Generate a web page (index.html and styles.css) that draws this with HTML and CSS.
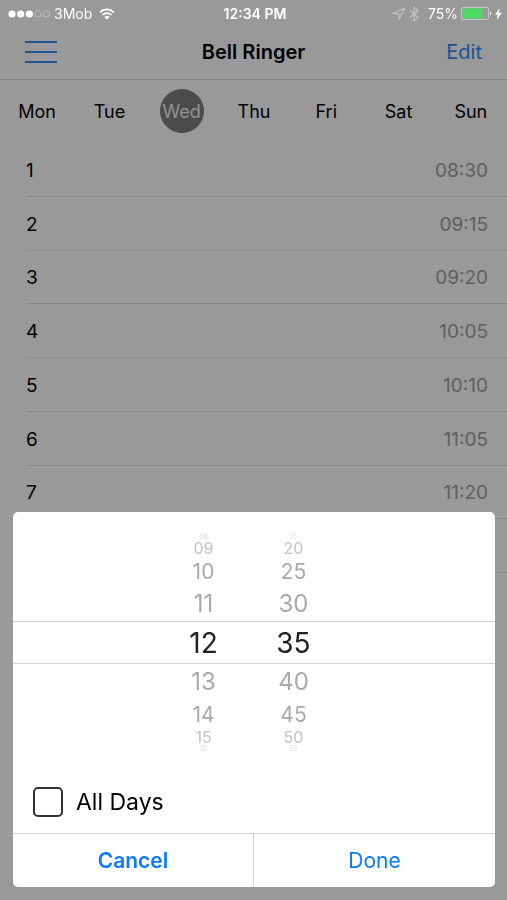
FILE: index.html
```
<!DOCTYPE html>
<html lang="en">
<head>
    <meta charset="UTF-8">
    <meta name="viewport" content="width=device-width, initial-scale=1.0">
    <title>Bell Ringer</title>
    <link rel="stylesheet" href="styles.css">
</head>
<body>
    <div class="status">
        <div class="status-left">
            <svg width="42" height="10" viewBox="0 0 42 10">
                <g fill="#fff">
                    <circle cx="4" cy="5" r="3.6"/>
                    <circle cx="12.7" cy="5" r="3.6"/>
                    <circle cx="21.4" cy="5" r="3.6"/>
                </g>
                <g fill="none" stroke="#c8c8c8" stroke-width="0.8">
                    <circle cx="30" cy="5" r="3.2"/>
                    <circle cx="38.4" cy="5" r="3.2"/>
                </g>
            </svg>
            <span>3Mob</span>
            <svg width="16" height="12" viewBox="0 0 16 12" fill="none" stroke="#fff" stroke-width="1.7">
                <path d="M1 4.3a10 10 0 0 1 14 0"/>
                <path d="M3.5 6.9a6.4 6.4 0 0 1 9 0"/>
                <path d="M8 11.8 5.4 9.1a3.7 3.7 0 0 1 5.2 0z" fill="#fff" stroke="none"/>
            </svg>
        </div>
        <div class="clock">12:34 PM</div>
        <div class="status-right">
            <svg width="14" height="13" viewBox="0 0 14 13" fill="none" stroke="#c4c4c4" stroke-width="1.1" stroke-linejoin="round">
                <path d="M12.8 1 1 6.4l5.7.5.5 5.2z"/>
            </svg>
            <svg width="10" height="16" viewBox="0 0 10 16" fill="none" stroke="#c4c4c4" stroke-width="1.2">
                <path d="M1 4.5l8 7-4 3.4V1.1l4 3.4-8 7"/>
            </svg>
            <span>75%</span>
            <svg width="31" height="13" viewBox="0 0 31 13">
                <rect x="0.5" y="0.5" width="27" height="12" rx="1.5" fill="none" stroke="#c8c8c8"/>
                <rect x="1.5" y="1.5" width="20" height="10" fill="#4cd964"/>
                <path d="M29 4.5c1.6.5 1.6 3.5 0 4z" fill="#fff"/>
            </svg>
            <svg width="7" height="12" viewBox="0 0 7 12" fill="#fff">
                <path d="M4.6 0 0 6.8h2.8L1.8 12 7 4.8H4z"/>
            </svg>
        </div>
    </div>

    <header class="nav">
        <button class="menu" aria-label="Menu">
            <svg width="32" height="22" viewBox="0 0 32 22" stroke="#3a8cf5" stroke-width="2">
                <path d="M0 1h32M0 11h32M0 21h32"/>
            </svg>
        </button>
        <h1>Bell Ringer</h1>
        <button class="edit">Edit</button>
    </header>

    <div class="days">
        <button>Mon</button>
        <button>Tue</button>
        <button class="active">Wed</button>
        <button>Thu</button>
        <button>Fri</button>
        <button>Sat</button>
        <button>Sun</button>
    </div>

    <ul class="bells">
        <li><span>1</span><time>08:30</time></li>
        <li><span>2</span><time>09:15</time></li>
        <li><span>3</span><time>09:20</time></li>
        <li><span>4</span><time>10:05</time></li>
        <li><span>5</span><time>10:10</time></li>
        <li><span>6</span><time>11:05</time></li>
        <li><span>7</span><time>11:20</time></li>
        <li></li>
    </ul>

    <div class="overlay">
        <form class="dialog" role="dialog" aria-label="Bell time">
            <div class="wheel">
                <div class="row edge"><button type="button">08</button><button type="button">15</button></div>
                <div class="row far"><button type="button">09</button><button type="button">20</button></div>
                <div class="row mid"><button type="button">10</button><button type="button">25</button></div>
                <div class="row near"><button type="button">11</button><button type="button">30</button></div>
                <div class="row selected"><button type="button">12</button><button type="button">35</button></div>
                <div class="row near"><button type="button">13</button><button type="button">40</button></div>
                <div class="row mid"><button type="button">14</button><button type="button">45</button></div>
                <div class="row far"><button type="button">15</button><button type="button">50</button></div>
                <div class="row edge"><button type="button">16</button><button type="button">55</button></div>
            </div>
            <div class="option">
                <input type="checkbox" id="all_days">
                <label for="all_days">All Days</label>
            </div>
            <div class="actions">
                <button type="button" class="cancel">Cancel</button>
                <button type="button">Done</button>
            </div>
        </form>
    </div>
</body>
</html>
```

FILE: styles.css
```
*{
    margin: 0;
    padding: 0;
    box-sizing: border-box;
}
body{
    font-family: Inter, "Liberation Sans", sans-serif;
    font-size: 18px;
    color: #000;
    background: #fff;
}
button{
    font: inherit;
    color: inherit;
    background: none;
    border: none;
}
svg{
    display: block;
}

/* status bar stays bright above the dimmed page */
.status{
    position: relative;
    z-index: 2;
    display: grid;
    grid-template-columns: 1fr auto 1fr;
    align-items: center;
    height: 27px;
    padding: 0 5px 0 8px;
    font-size: 14px;
    color: #fff;
}
.status-left, .status-right{
    display: flex;
    align-items: center;
    gap: 4px;
}
.status-left svg:last-child{
    margin-left: 3px;
}
.status-right{
    justify-content: flex-end;
    gap: 3px;
}
.status-right span{
    margin-left: 6px;
}
.clock{
    font-weight: 600;
}

.nav{
    display: grid;
    grid-template-columns: 1fr auto 1fr;
    align-items: center;
    height: 53px;
    padding: 0 25px 2px;
    border-bottom: 1px solid #e2e2e2;
}
.nav h1{
    font-size: 20px;
    font-weight: 600;
}
.menu{
    justify-self: start;
}
.edit{
    justify-self: end;
    font-size: 20px;
    color: #2b8cff;
}

.days{
    display: grid;
    grid-template-columns: repeat(7, 1fr);
    place-items: center;
    height: 63px;
    padding: 0 0 1px 1px;
}
.days .active{
    width: 44px;
    height: 44px;
    border-radius: 50%;
    background: #7d7d7d;
    color: #f4f4f4;
}

.bells{
    display: grid;
    grid-auto-rows: 1fr;
    height: 430px;
    padding-left: 26px;
    list-style: none;
    font-size: 19px;
}
.bells li{
    display: flex;
    justify-content: space-between;
    align-items: center;
    padding: 2px 19px 0 0;
    border-bottom: 1px solid #e2e2e2;
}
.bells time{
    color: #a0a0a0;
}

.overlay{
    position: fixed;
    inset: 0;
    z-index: 1;
    display: flex;
    align-items: flex-end;
    padding: 12px 12px 13px 13px;
    background: rgba(0, 0, 0, 0.4);
}
.dialog{
    width: 100%;
    border-radius: 5px;
    background: #fff;
    overflow: hidden;
}

.wheel{
    padding-top: 21px;
}
.row{
    display: flex;
    justify-content: center;
    align-items: center;
    gap: 30px;
    padding-right: 11px;
    color: #aaa;
}
.row button{
    width: 60px;
}
.row.selected{
    height: 43px;
    border-top: 1px solid #d2d2d2;
    border-bottom: 1px solid #d2d2d2;
    font-size: 28px;
    color: #222;
}
.row.near{
    height: 35px;
    font-size: 24px;
}
.row.mid{
    height: 30px;
    font-size: 21px;
}
.row.far{
    height: 16px;
    font-size: 16px;
    line-height: 16px;
    color: #c4c4c4;
}
/* numbers rolling out of view */
.row.edge{
    height: 7px;
    font-size: 7px;
    line-height: 7px;
    color: #dcdcdc;
}

.option{
    display: flex;
    align-items: center;
    gap: 13px;
    padding: 35px 20px 16px;
    font-size: 23px;
}
.option input{
    appearance: none;
    width: 30px;
    height: 30px;
    border: 2px solid #333;
    border-radius: 5px;
    background: #fff;
}

.actions{
    display: grid;
    grid-template-columns: 1fr 1fr;
    height: 54px;
    border-top: 1px solid #d2d2d2;
    font-size: 21px;
    color: #0a7aff;
}
.actions .cancel{
    border-right: 1px solid #d2d2d2;
    font-weight: 600;
}
```
